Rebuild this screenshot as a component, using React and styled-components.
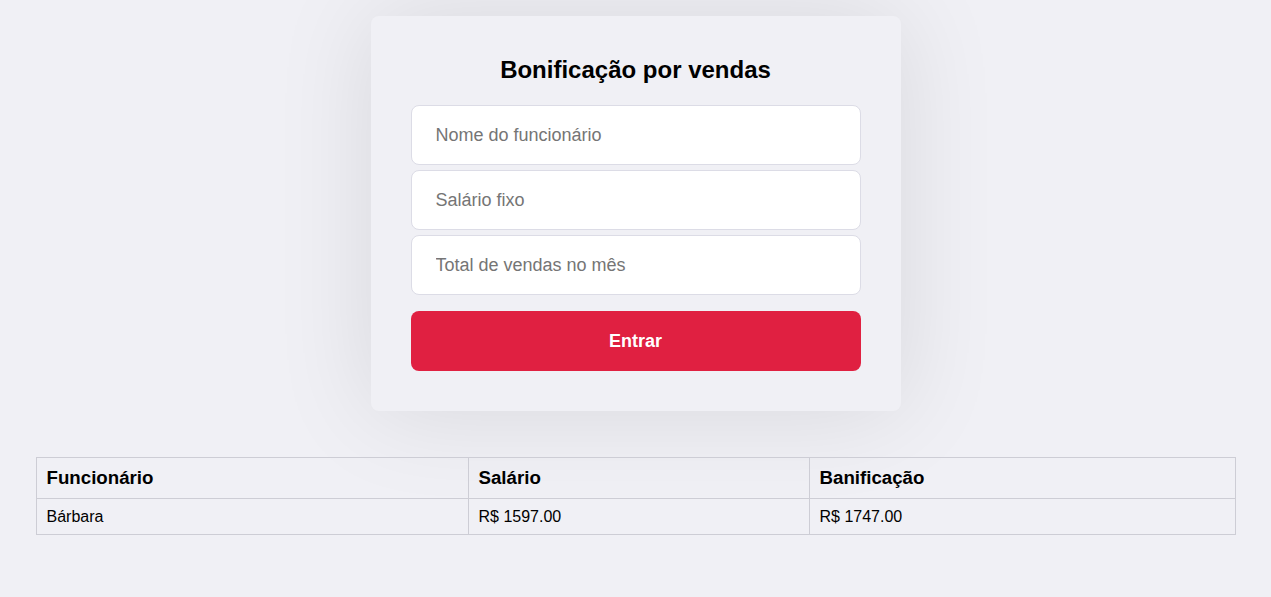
import React from "react";
import styled, { createGlobalStyle } from "styled-components";

const Global = createGlobalStyle`
  * { box-sizing: border-box; }
  body {
    margin: 0;
    background: #f0f0f5;
    font-family: "Liberation Sans", Arial, sans-serif;
    color: #000;
  }
`;

const Page = styled.main`
  display: flex;
  flex-direction: column;
  align-items: center;
  padding-top: 16px;
`;

const Card = styled.section`
  width: 530px;
  padding: 40px;
  background: #f0f0f5;
  border-radius: 8px;
  box-shadow: 0 0 100px rgba(0, 0, 0, 0.1);
  display: flex;
  flex-direction: column;
`;

const Title = styled.h1`
  margin: 0 0 21px;
  font-size: 24px;
  line-height: 28px;
  font-weight: 700;
  text-align: center;
`;

const Form = styled.form`
  display: flex;
  flex-direction: column;
  gap: 5px;
`;

const Input = styled.input`
  width: 100%;
  height: 60px;
  padding: 0 24px;
  border: 1px solid #dcdce6;
  border-radius: 8px;
  background: #fff;
  font-family: "Liberation Sans", Arial, sans-serif;
  font-size: 18px;
  color: #333;
  outline: none;
  &::placeholder { color: #757575; }
`;

const Button = styled.button`
  margin-top: 11px;
  width: 100%;
  height: 60px;
  border: 0;
  border-radius: 8px;
  background: #e02041;
  color: #fff;
  font-family: "Liberation Sans", Arial, sans-serif;
  font-size: 18px;
  font-weight: 700;
  cursor: pointer;
`;

const Table = styled.table`
  margin-top: 46px;
  width: 1199px;
  border-collapse: collapse;
  table-layout: fixed;
`;

const Col = styled.col`
  width: ${(p) => p.$w}px;
`;

const Th = styled.th`
  padding: 9px 10px;
  border: 1px solid #cdcdd5;
  text-align: left;
  font-size: 18.7px;
  line-height: 22px;
  font-weight: 700;
`;

const Td = styled.td`
  padding: 9px 10px 8px;
  border: 1px solid #cdcdd5;
  font-size: 16px;
  line-height: 18px;
`;

const rows = [{ name: "Bárbara", salary: "R$ 1597.00", bonus: "R$ 1747.00" }];

export default function App() {
  return (
    <>
      <Global />
      <Page>
        <Card>
          <Title>Bonificação por vendas</Title>
          <Form onSubmit={(e) => e.preventDefault()}>
            <Input placeholder="Nome do funcionário" />
            <Input placeholder="Salário fixo" />
            <Input placeholder="Total de vendas no mês" />
            <Button type="submit">Entrar</Button>
          </Form>
        </Card>
        <Table>
          <colgroup>
            <Col $w={432} />
            <Col $w={341} />
            <Col $w={426} />
          </colgroup>
          <thead>
            <tr>
              <Th>Funcionário</Th>
              <Th>Salário</Th>
              <Th>Banificação</Th>
            </tr>
          </thead>
          <tbody>
            {rows.map((r) => (
              <tr key={r.name}>
                <Td>{r.name}</Td>
                <Td>{r.salary}</Td>
                <Td>{r.bonus}</Td>
              </tr>
            ))}
          </tbody>
        </Table>
      </Page>
    </>
  );
}
